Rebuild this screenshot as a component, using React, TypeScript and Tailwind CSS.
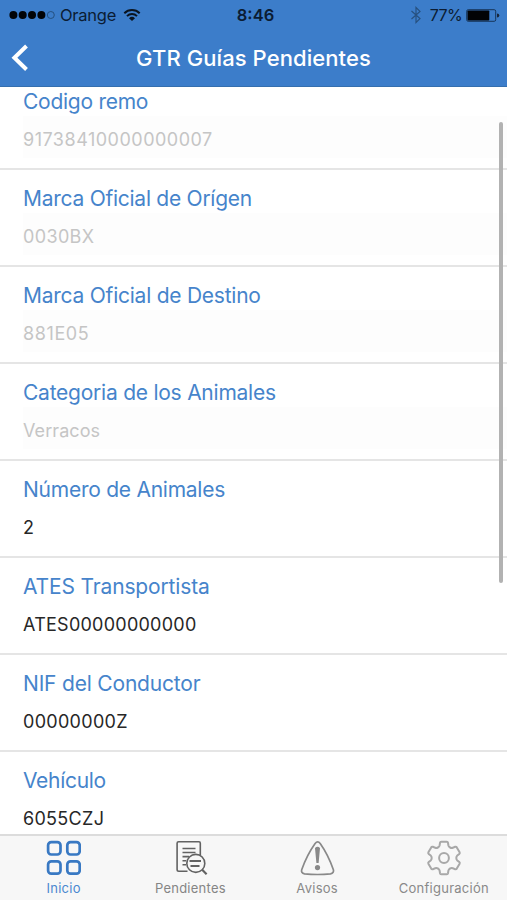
import type { ReactNode } from "react";

type Field = { label: string; value: string; disabled?: boolean; labelClass: string; valueClass: string };

const fields: Field[] = [
  { label: "Codigo remo", value: "91738410000000007", disabled: true, labelClass: "tracking-[-0.26px]", valueClass: "tracking-[0.5px]" },
  { label: "Marca Oficial de Orígen", value: "0030BX", disabled: true, labelClass: "tracking-[-0.26px]", valueClass: "tracking-[0.35px]" },
  { label: "Marca Oficial de Destino", value: "881E05", disabled: true, labelClass: "tracking-[-0.24px]", valueClass: "tracking-[0.6px]" },
  { label: "Categoria de los Animales", value: "Verracos", disabled: true, labelClass: "tracking-[-0.24px]", valueClass: "tracking-[0.08px]" },
  { label: "Número de Animales", value: "2", labelClass: "tracking-[-0.25px]", valueClass: "tracking-[0px]" },
  { label: "ATES Transportista", value: "ATES00000000000", labelClass: "tracking-[-0.15px]", valueClass: "tracking-[0.25px]" },
  { label: "NIF del Conductor", value: "00000000Z", labelClass: "tracking-[-0.19px]", valueClass: "tracking-[0.3px]" },
  { label: "Vehículo", value: "6055CZJ", labelClass: "tracking-[-0.3px]", valueClass: "tracking-[0.3px]" },
];

function FieldRow({ field }: { field: Field }) {
  return (
    <div className="h-[97.1px] shrink-0 border-b-2 border-[#e5e5e5] pl-[23px] pt-[15px]">
      <div className={`h-7 whitespace-nowrap text-[21px] leading-7 text-[#4684cb] ${field.labelClass}`}>{field.label}</div>
      <div className={`h-[42px] whitespace-nowrap text-[18px] leading-[48px] ${field.disabled ? "bg-[#fdfdfd] text-[#c5c5c5]" : "text-[#272727]"} ${field.valueClass}`}>
        {field.value}
      </div>
    </div>
  );
}

function StatusBar() {
  return (
    <div className="grid h-[30px] grid-cols-3 items-center text-[17px] text-[#0b1c33]">
      <div className="flex items-center pl-[9px]">
        <svg width="47" height="10" viewBox="0 0 47 10" className="shrink-0">
          <circle cx="4.4" cy="5" r="4" fill="#020407" />
          <circle cx="13.7" cy="5" r="4" fill="#020407" />
          <circle cx="23" cy="5" r="4" fill="#020407" />
          <circle cx="32.4" cy="5" r="4" fill="#020407" />
          <circle cx="41.8" cy="5" r="3.5" fill="none" stroke="#24507f" />
        </svg>
        <span className="ml-[4px] text-[16.5px] tracking-[-0.25px]">Orange</span>
        <svg width="18" height="14" viewBox="0 0 18 14" className="ml-[7px] shrink-0" fill="none" stroke="#0a1420" strokeWidth="2">
          <path d="M1.3 5.2A11 11 0 0 1 16.7 5.2" />
          <path d="M4 8.1A7.2 7.2 0 0 1 14 8.1" />
          <path d="M6 10.2A4.3 4.3 0 0 1 12 10.2L9 13Z" fill="#0a1420" stroke="none" />
        </svg>
      </div>
      <div className="pl-1 text-center text-[16.5px] font-semibold">8:46</div>
      <div className="flex items-center justify-end pr-[7px]">
        <svg width="12" height="18" viewBox="0 0 12 18" fill="none" stroke="#27517f" strokeWidth="1.2">
          <path d="M1.5 5 10 12.6 6 16.5V1.5L10 5.4 1.5 13" />
        </svg>
        <span className="ml-[8px] text-[16px] tracking-[-0.6px]">77%</span>
        <svg width="34" height="13" viewBox="0 0 34 13" className="ml-[4px]">
          <rect x="0.7" y="0.7" width="29" height="11.6" rx="1.5" fill="none" stroke="#17365b" />
          <rect x="1.5" y="1.5" width="21.8" height="10" rx="0.8" fill="#020305" />
          <path d="M31 4.5Q33.3 4.7 33.3 6.5T31 8.5Z" fill="#17263a" />
        </svg>
      </div>
    </div>
  );
}

function Tab({ label, color, children }: { label: string; color: string; children: ReactNode }) {
  return (
    <div className={`flex flex-1 flex-col items-center pt-[4px] ${color}`}>
      {children}
      <span className="mt-[3px] whitespace-nowrap pl-[0.5px] text-[13px] leading-[18px] tracking-[0.25px]">{label}</span>
    </div>
  );
}

export default function App() {
  return (
    <div className="flex h-[900px] w-[507px] flex-col overflow-hidden bg-white font-['Inter','Liberation_Sans',sans-serif]">
      <header className="h-[87px] shrink-0 border-b border-[#356fae] bg-[#3c7dca]">
        <StatusBar />
        <div className="flex h-[56px] items-center">
          <svg width="20" height="30" viewBox="0 0 20 30" className="ml-[10px]" fill="none" stroke="white" strokeWidth="4">
            <path d="M16.5 3 4.4 14.7 16.5 26.5" />
          </svg>
          <h1 className="flex-1 pr-[30px] text-center text-[22px] font-medium tracking-[0.08px] text-white">GTR Guías Pendientes</h1>
        </div>
      </header>
      <main className="relative flex min-h-0 flex-1 flex-col overflow-hidden">
        <div className="-mt-[14.2px] flex flex-col">
          {fields.map((field) => (
            <FieldRow key={field.label} field={field} />
          ))}
        </div>
        <div className="absolute right-[4px] top-[35px] h-[461px] w-[4px] rounded-full bg-[#b2b2b2]" />
      </main>
      <nav className="flex h-[66px] shrink-0 border-t-2 border-[#dcdcdc] bg-[#f7f7f7]">
        <Tab label="Inicio" color="text-[#4a88d0]">
          <svg width="36" height="36" viewBox="-1 0 36 36" fill="none" stroke="#3979c3" strokeWidth="2.7">
            <rect x="2.1" y="2.1" width="12.4" height="12.4" rx="3.2" />
            <rect x="21.3" y="2.1" width="12.4" height="12.4" rx="3.2" />
            <rect x="2.1" y="21.3" width="12.4" height="12.4" rx="3.2" />
            <rect x="21.3" y="21.3" width="12.4" height="12.4" rx="3.2" />
          </svg>
        </Tab>
        <Tab label="Pendientes" color="text-[#858585]">
          <svg width="36" height="36" viewBox="0 0 36 36" fill="none" stroke="#626262" strokeWidth="1.6">
            <path d="M15.5 31.2H6.8Q5.1 31.2 5.1 29.5V3.2Q5.1 1.7 6.6 1.7H27Q28.3 1.7 28.3 3.2V15.5" />
            <path d="M10.5 8.5H23.5M10.5 12.5H23.5M10.5 16.6H17M10.5 20.7H14M10.5 24.8H14" />
            <circle cx="23.8" cy="23.4" r="9" />
            <path d="M17.5 21H29M18.5 26H27.5" strokeWidth="2" />
            <path d="M30.2 29.8 34.6 34.2" strokeWidth="2.2" />
          </svg>
        </Tab>
        <Tab label="Avisos" color="text-[#898989]">
          <svg width="36" height="36" viewBox="-0.5 0 36 36" fill="none" stroke="#898989" strokeWidth="1.7">
            <path d="M15.6 3.5Q18.2 0.3 20.7 3.5Q28.5 14.5 33.8 29.5Q34.8 33 31 33.8Q18 35.2 5 33.8Q1.2 33 2.3 29.5Q7.5 14.8 15.6 3.5Z" />
            <path d="M15.5 8Q18 5.5 20.5 8L19.1 23H16.9Z" fill="#898989" stroke="none" />
            <circle cx="18" cy="27.6" r="2.6" fill="#898989" stroke="none" />
          </svg>
        </Tab>
        <Tab label="Configuración" color="text-[#898989]">
          <svg width="36" height="36" viewBox="0 0 36 36" fill="none" stroke="#a8a8a8" strokeWidth="2" strokeLinejoin="round">
            <path d="M15.2 1.8H20.8Q21.8 1.8 22 2.8L22.4 5.4Q22.8 6.8 24.1 7.5 25.4 8.2 26.8 7.7L29.2 6.8Q30.2 6.5 30.8 7.4L33.6 12.2Q34.1 13.2 33.3 13.9L31.3 15.6Q30.3 16.5 30.3 18T31.3 20.4L33.3 22.1Q34.1 22.8 33.6 23.8L30.8 28.6Q30.2 29.5 29.2 29.2L26.8 28.3Q25.4 27.8 24.1 28.5 22.8 29.2 22.4 30.6L22 33.2Q21.8 34.2 20.8 34.2H15.2Q14.2 34.2 14 33.2L13.6 30.6Q13.2 29.2 11.9 28.5 10.6 27.8 9.2 28.3L6.8 29.2Q5.8 29.5 5.2 28.6L2.4 23.8Q1.9 22.8 2.7 22.1L4.7 20.4Q5.7 19.5 5.7 18T4.7 15.6L2.7 13.9Q1.9 13.2 2.4 12.2L5.2 7.4Q5.8 6.5 6.8 6.8L9.2 7.7Q10.6 8.2 11.9 7.5 13.2 6.8 13.6 5.4L14 2.8Q14.2 1.8 15.2 1.8Z" />
            <circle cx="18" cy="18" r="4.9" />
          </svg>
        </Tab>
      </nav>
    </div>
  );
}
